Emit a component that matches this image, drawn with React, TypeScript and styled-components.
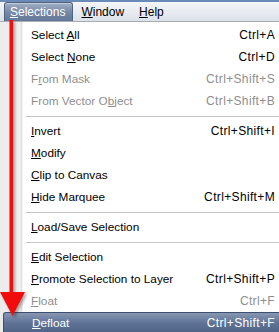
import styled, { createGlobalStyle, css } from "styled-components";

const GlobalStyle = createGlobalStyle`
  html, body {
    margin: 0;
    padding: 0;
    background: #ffffff;
    overflow: hidden;
  }
  body {
    font-family: "Liberation Sans", Arial, sans-serif;
  }
`;

const Frame = styled.div`
  position: relative;
  width: 279px;
  height: 332px;
  overflow: hidden;
  background: #ffffff;
`;

const MenuBar = styled.div`
  display: flex;
  align-items: flex-end;
  height: 22px;
  padding-left: 4px;
  box-sizing: border-box;
  border-top: 2px solid #6c8ab8;
  border-bottom: 1px solid #a8acb2;
  background: linear-gradient(#f4f6f9, #dde2ea);
`;

const MenuTitle = styled.div<{ $active?: boolean }>`
  display: flex;
  align-items: center;
  height: 19px;
  padding: 0 7px 0 5px;
  margin-right: 3px;
  font-size: 12px;
  color: #000;
  border-radius: 3px 3px 0 0;
  box-sizing: border-box;

  ${(p) =>
    p.$active &&
    css`
      color: #ffffff;
      background: linear-gradient(#a2b0c7, #7386a4 55%, #64789a);
      border: 1px solid #52637f;
      border-bottom: none;
      box-shadow: inset 0 1px 0 rgba(255, 255, 255, 0.35);
    `}
`;

const Dropdown = styled.div`
  display: flex;
  flex-direction: column;
  padding-top: 2px;
  background: linear-gradient(
    to right,
    #ebebeb 0,
    #f1f1f1 20px,
    #e2e3e3 21px,
    #e2e3e3 22px,
    #ffffff 23px
  );
`;

const Item = styled.div<{ $disabled?: boolean; $active?: boolean }>`
  display: grid;
  grid-template-columns: 1fr auto;
  align-items: center;
  height: 22px;
  padding: 0 4px 0 31px;
  font-size: 11.8px;
  color: ${(p) => (p.$disabled ? "#8e8e8e" : "#000000")};

  ${(p) =>
    p.$active &&
    css`
      margin-left: 3px;
      padding-left: 28px;
      color: #ffffff;
      border: 1px solid #3e5070;
      border-right: none;
      border-radius: 3px 0 0 3px;
      background: linear-gradient(#8797b2, #5f7397 50%, #4f6387);
      box-sizing: border-box;
    `}
`;

const Shortcut = styled.span`
  font-size: 12px;
  letter-spacing: 0.35px;
  text-align: right;
`;

const Separator = styled.div`
  height: 8px;
  display: flex;
  align-items: center;
  padding-left: 26px;

  &::after {
    content: "";
    flex: 1;
    height: 1px;
    background: #c5c5c5;
  }
`;

const Arrow = styled.svg`
  position: absolute;
  left: 0;
  top: 0;
  pointer-events: none;
`;

type Entry =
  | { sep: true }
  | {
      sep?: false;
      label: string;
      key: number;
      shortcut?: string;
      disabled?: boolean;
      active?: boolean;
    };

const entries: Entry[] = [
  { label: "Select All", key: 7, shortcut: "Ctrl+A" },
  { label: "Select None", key: 7, shortcut: "Ctrl+D" },
  { label: "From Mask", key: 1, shortcut: "Ctrl+Shift+S", disabled: true },
  { label: "From Vector Object", key: 13, shortcut: "Ctrl+Shift+B", disabled: true },
  { sep: true },
  { label: "Invert", key: 0, shortcut: "Ctrl+Shift+I" },
  { label: "Modify", key: 0 },
  { label: "Clip to Canvas", key: 0 },
  { label: "Hide Marquee", key: 0, shortcut: "Ctrl+Shift+M" },
  { sep: true },
  { label: "Load/Save Selection", key: 0 },
  { sep: true },
  { label: "Edit Selection", key: 0 },
  { label: "Promote Selection to Layer", key: 0, shortcut: "Ctrl+Shift+P" },
  { label: "Float", key: 0, shortcut: "Ctrl+F", disabled: true },
  { label: "Defloat", key: 0, shortcut: "Ctrl+Shift+F", active: true },
];

function Label({ text, at }: { text: string; at: number }) {
  return (
    <span>
      {text.slice(0, at)}
      <u>{text[at]}</u>
      {text.slice(at + 1)}
    </span>
  );
}

export default function App() {
  return (
    <Frame>
      <GlobalStyle />
      <MenuBar>
        <MenuTitle $active>
          <Label text="Selections" at={0} />
        </MenuTitle>
        <MenuTitle>
          <Label text="Window" at={0} />
        </MenuTitle>
        <MenuTitle>
          <Label text="Help" at={0} />
        </MenuTitle>
      </MenuBar>
      <Dropdown>
        {entries.map((e, i) =>
          e.sep ? (
            <Separator key={i} />
          ) : (
            <Item key={i} $disabled={e.disabled} $active={e.active}>
              <Label text={e.label} at={e.key} />
              <Shortcut>{e.shortcut}</Shortcut>
            </Item>
          )
        )}
      </Dropdown>
      <Arrow width="279" height="332" viewBox="0 0 279 332">
        <defs>
          <filter id="sh" x="-50%" y="-10%" width="200%" height="120%">
            <feDropShadow dx="2" dy="2" stdDeviation="1.5" floodColor="#000" floodOpacity="0.35" />
          </filter>
        </defs>
        <g filter="url(#sh)">
          <rect x="9.5" y="20" width="3.5" height="274" fill="#f20a0a" />
          <polygon points="0,292 25,292 12.5,316" fill="#f20a0a" />
        </g>
      </Arrow>
    </Frame>
  );
}
